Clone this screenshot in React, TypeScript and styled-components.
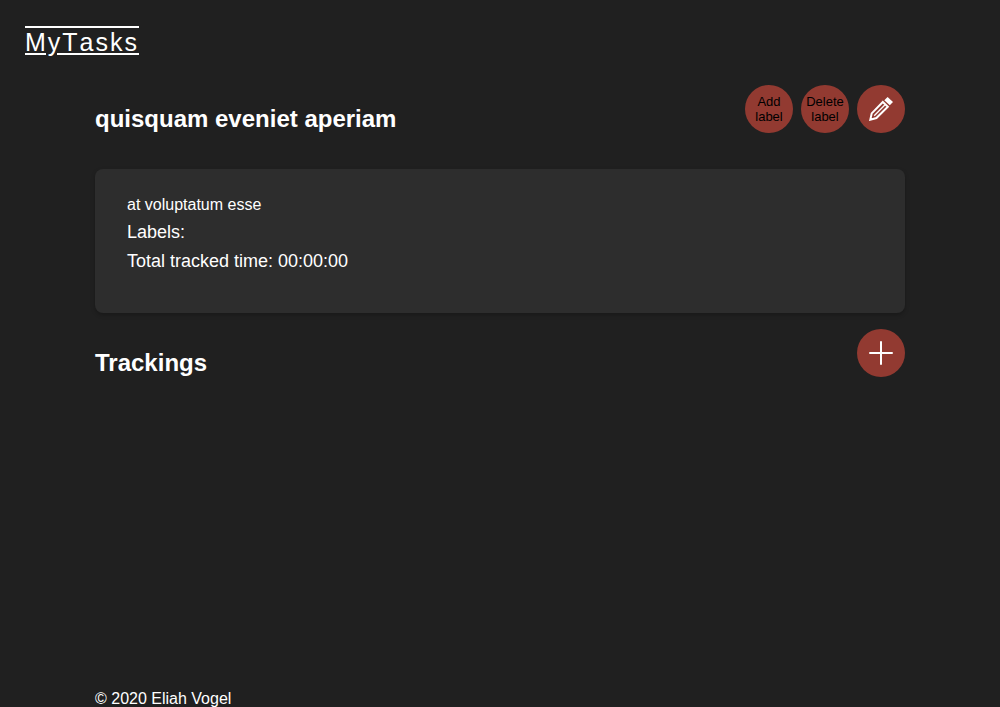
import React from "react";
import styled, { createGlobalStyle } from "styled-components";

const GlobalStyle = createGlobalStyle`
  * { box-sizing: border-box; }
  body {
    margin: 0;
    background: #202020;
    color: #fff;
    font-family: "Liberation Sans", Arial, sans-serif;
    font-size: 16px;
  }
`;

const Page = styled.div`
  min-height: 100vh;
  display: flex;
  flex-direction: column;
`;

const Header = styled.header`
  padding: 27px 25px 28px;
`;

const Logo = styled.a`
  display: block;
  width: fit-content;
  color: #fff;
  font-size: 25px;
  font-kerning: none;
  line-height: 30px;
  letter-spacing: 2px;
  text-decoration: underline overline;
`;

const Main = styled.main`
  flex: 1;
  padding: 0 95px;
`;

const TitleRow = styled.div`
  display: flex;
  justify-content: space-between;
  align-items: flex-start;
`;

const Title = styled.h2`
  margin: 20px 0 36px;
  font-size: 24px;
  line-height: 28px;
`;

const Actions = styled.div`
  display: flex;
  gap: 8px;
`;

const RoundButton = styled.button`
  display: flex;
  align-items: center;
  justify-content: center;
  width: 48px;
  height: 48px;
  padding: 0;
  border: 0;
  border-radius: 50%;
  background: #923a31;
  color: #000;
  font-family: inherit;
  font-size: 13px;
  line-height: 15px;
  cursor: pointer;
`;

const Card = styled.section`
  min-height: 144px;
  margin-bottom: 16px;
  padding: 24px 32px 32px;
  border-radius: 8px;
  background: #2d2d2d;
  box-shadow: 0 2px 4px rgba(0, 0, 0, 0.25);
`;

const Description = styled.p`
  margin: 0 0 1px;
  line-height: 24px;
`;

const Detail = styled.p`
  margin: 0;
  font-size: 18px;
  line-height: 29px;
`;

const Footer = styled.footer`
  padding: 0 95px;
  line-height: 16px;
`;

export default function App() {
  return (
    <Page>
      <GlobalStyle />
      <Header>
        <Logo href="#">MyTasks</Logo>
      </Header>
      <Main>
        <TitleRow>
          <Title>quisquam eveniet aperiam</Title>
          <Actions>
            <RoundButton>Add label</RoundButton>
            <RoundButton>Delete label</RoundButton>
            <RoundButton aria-label="Edit task">
              <svg width="24" height="24" viewBox="0 0 24 24" fill="none" stroke="#fff">
                <path d="M13.8 5 2.7 16.4 1.3 22.7 7.4 21 18.8 9.8z" strokeWidth="2" />
                <path d="M5.2 18.8 15.8 8" strokeWidth="1.3" />
                <path d="M18.6 0 24 4.9l-3.2 3.3-5.5-5z" fill="#fff" stroke="none" />
              </svg>
            </RoundButton>
          </Actions>
        </TitleRow>
        <Card>
          <Description>at voluptatum esse</Description>
          <Detail>Labels:</Detail>
          <Detail>Total tracked time: 00:00:00</Detail>
        </Card>
        <TitleRow>
          <Title>Trackings</Title>
          <RoundButton aria-label="Add tracking">
            <svg width="24" height="24" viewBox="0 0 24 24" stroke="#fff" strokeWidth="2" strokeLinecap="round">
              <path d="M12 1v22M1 12h22" />
            </svg>
          </RoundButton>
        </TitleRow>
      </Main>
      <Footer>© 2020 Eliah Vogel</Footer>
    </Page>
  );
}
